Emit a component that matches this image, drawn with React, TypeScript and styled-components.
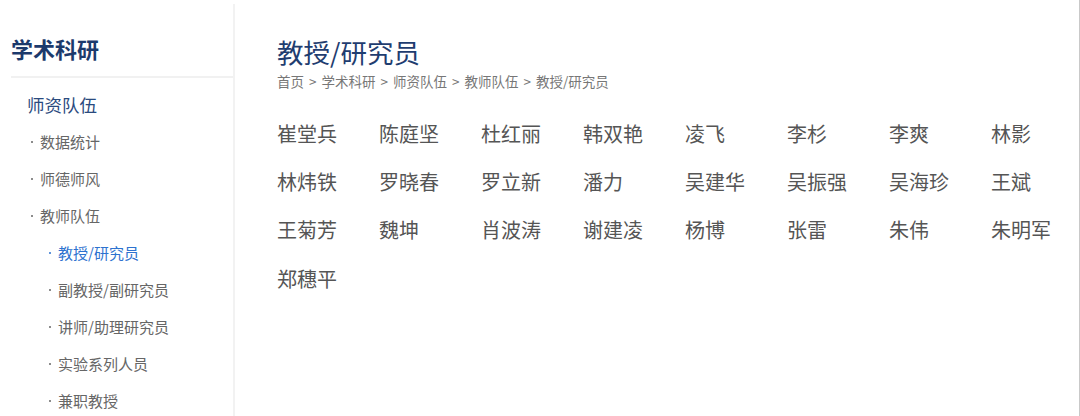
import React from 'react'
import styled, { createGlobalStyle } from 'styled-components'

const GlobalStyle = createGlobalStyle`
  html, body {
    margin: 0;
    padding: 0;
    background: #fff;
  }
  body {
    font-family: "Noto Sans CJK SC", "Noto Sans", sans-serif;
  }
`

const Page = styled.div`
  box-sizing: border-box;
  width: 1080px;
  height: 416px;
  display: flex;
  align-items: flex-start;
  border-right: 1px solid #c9c9c9;
  overflow: hidden;
`

const Sidebar = styled.aside`
  box-sizing: border-box;
  width: 235px;
  flex-shrink: 0;
  margin-top: 4px;
  height: 412px;
  border-right: 2px solid #f2f2f2;
  padding-left: 11px;
`

const SideTitle = styled.h2`
  margin: 0;
  padding: 29px 0 13px;
  line-height: 30px;
  font-size: 22px;
  font-weight: 700;
  color: #1c3a6c;
  border-bottom: 2px solid #f1f1f1;
`

const SideList = styled.ul`
  list-style: none;
  margin: 8px 0 0;
  padding: 0;
`

const SectionItem = styled.li`
  padding-left: 16px;
  height: 37px;
  line-height: 37px;
  font-size: 17.5px;
  color: #2a4a7e;
`

const NavItem = styled.li<{ $level: number; $active?: boolean }>`
  display: flex;
  align-items: center;
  height: 37px;
  padding-left: ${p => (p.$level === 2 ? 38 : 20)}px;
  font-size: 15px;
  color: ${p => (p.$active ? '#2d72cf' : '#666')};
`

const Bullet = styled.span`
  width: 2px;
  height: 2px;
  border-radius: 50%;
  background: currentColor;
  margin-right: 7px;
  flex-shrink: 0;
`

const Main = styled.main`
  flex: 1;
  padding: 34px 0 0 42px;
`

const PageTitle = styled.h1`
  margin: 0;
  font-size: 26.5px;
  line-height: 36px;
  font-weight: 400;
  color: #1f3d70;
`

const Crumbs = styled.div`
  margin-top: 1px;
  font-size: 13.5px;
  line-height: 20px;
  color: #777;
`

const Sep = styled.span`
  margin: 0 5px;
`

const NameGrid = styled.div`
  margin-top: 18px;
  display: grid;
  grid-template-columns: repeat(8, 102px);
  grid-auto-rows: 48.3px;
  align-items: center;
`

const Name = styled.a`
  font-size: 20px;
  color: #555;
  text-decoration: none;
  white-space: nowrap;
`

const nav: { label: string; level: number; active?: boolean }[] = [
  { label: '数据统计', level: 1 },
  { label: '师德师风', level: 1 },
  { label: '教师队伍', level: 1 },
  { label: '教授/研究员', level: 2, active: true },
  { label: '副教授/副研究员', level: 2 },
  { label: '讲师/助理研究员', level: 2 },
  { label: '实验系列人员', level: 2 },
  { label: '兼职教授', level: 2 },
]

const crumbs = ['首页', '学术科研', '师资队伍', '教师队伍', '教授/研究员']

const names = [
  '崔堂兵', '陈庭坚', '杜红丽', '韩双艳', '凌飞', '李杉', '李爽', '林影',
  '林炜铁', '罗晓春', '罗立新', '潘力', '吴建华', '吴振强', '吴海珍', '王斌',
  '王菊芳', '魏坤', '肖波涛', '谢建凌', '杨博', '张雷', '朱伟', '朱明军',
  '郑穗平',
]

export default function App() {
  return (
    <>
      <GlobalStyle />
      <Page>
        <Sidebar>
          <SideTitle>学术科研</SideTitle>
          <SideList>
            <SectionItem>师资队伍</SectionItem>
            {nav.map(item => (
              <NavItem key={item.label} $level={item.level} $active={item.active}>
                <Bullet />
                {item.label}
              </NavItem>
            ))}
          </SideList>
        </Sidebar>
        <Main>
          <PageTitle>教授/研究员</PageTitle>
          <Crumbs>
            {crumbs.map((c, i) => (
              <React.Fragment key={c}>
                {i > 0 && <Sep>&gt;</Sep>}
                {c}
              </React.Fragment>
            ))}
          </Crumbs>
          <NameGrid>
            {names.map(n => (
              <Name key={n} href="#">{n}</Name>
            ))}
          </NameGrid>
        </Main>
      </Page>
    </>
  )
}
